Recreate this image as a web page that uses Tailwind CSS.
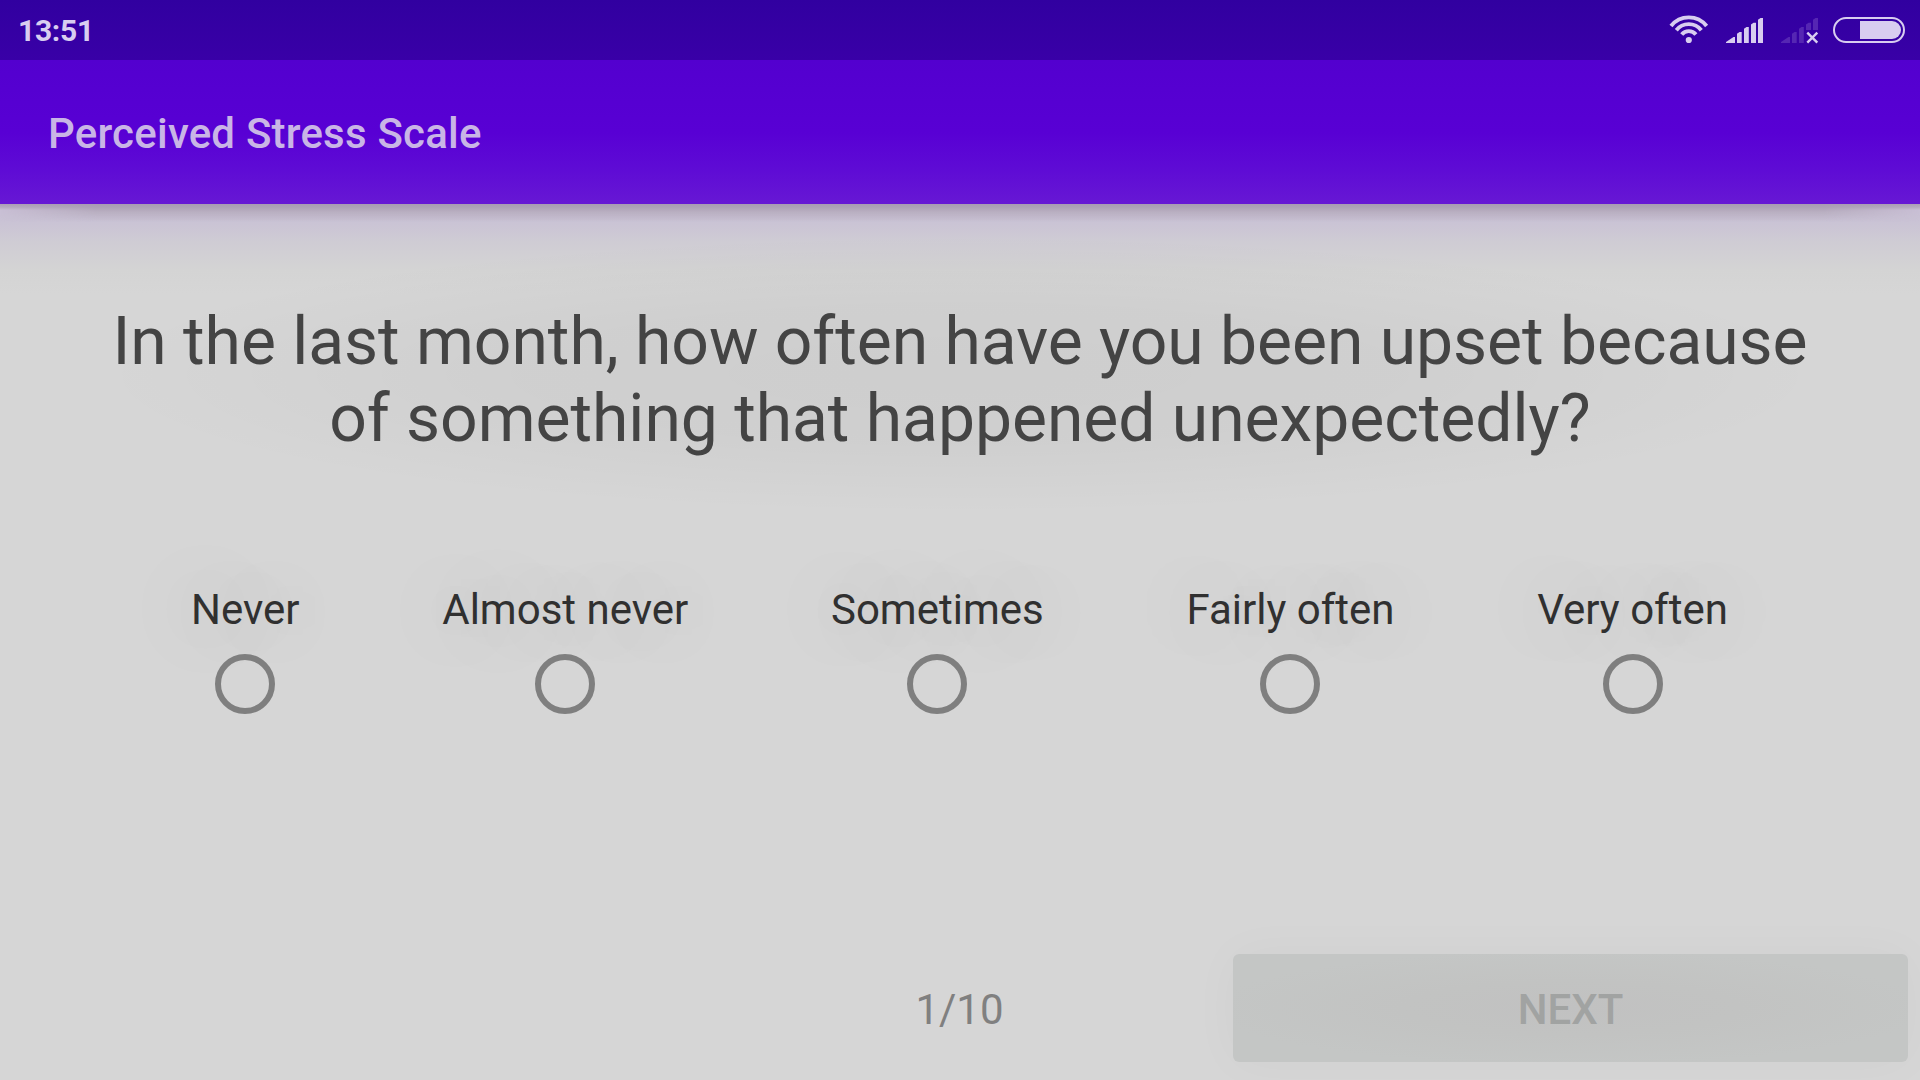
<!DOCTYPE html>
<html lang="en">
<head>
<meta charset="utf-8">
<title>Perceived Stress Scale</title>
<script src="https://cdn.jsdelivr.net/npm/@tailwindcss/browser@4"></script>
</head>
<body class="w-[1920px] h-[1080px] overflow-hidden flex flex-col bg-[#d6d6d6] font-[Roboto,sans-serif]">
  <div class="h-[60px] shrink-0 flex items-start bg-linear-to-b from-[#3100a0] to-[#3900a7] text-[#d8cdf0]">
    <span class="pl-[18px] pt-[13px] text-[30px] leading-[35px] font-bold tracking-[-0.3px]">13:51</span>
    <div class="ml-auto pr-[15px] flex">
      <svg class="mt-[15px] mr-[17px]" width="40" height="30" viewBox="0 0 40 30" fill="none" stroke="currentColor" stroke-width="3.9">
        <path d="M2 11A22.7 22.7 0 0 1 37.6 11M7.3 15.2A15.9 15.9 0 0 1 32.3 15.2M12.7 19.5A9.1 9.1 0 0 1 26.9 19.5"/>
        <circle cx="19.8" cy="25" r="3.1" fill="currentColor" stroke="none"/>
      </svg>
      <svg class="mt-[18px] mr-[17px]" width="38" height="26" viewBox="0 0 38 26" fill="currentColor">
        <path d="M0 25V24L7.5 19H9V25ZM11 25V15.8L13.5 14H15.7V25ZM18 25V10.8L20.5 9H22.8V25ZM25 25V6.5L27.5 4.8H30V25ZM32 25V1.8L34.5 0H37V25Z"/>
      </svg>
      <svg class="mt-[18px] mr-[14px]" width="38" height="26" viewBox="0 0 38 26">
        <path fill="#5526b3" d="M0 25V24L7.5 19H9V25ZM11 25V15.8L13.5 14H15.7V25ZM18 25V10.8L20.5 9H22.8V25ZM25 12V6.5L27.5 4.8H30V12ZM32 12V1.8L34.5 0H37V12Z"/>
        <path stroke="currentColor" stroke-width="2.4" d="M26.3 14.7L36.3 24.7M36.3 14.7L26.3 24.7"/>
      </svg>
      <svg class="mt-[17px]" width="72" height="26" viewBox="0 0 72 26">
        <rect x="1" y="1" width="70" height="24" rx="12" fill="none" stroke="currentColor" stroke-width="2"/>
        <path fill="currentColor" d="M27 4H59A9 9 0 0 1 59 22H27Z"/>
      </svg>
    </div>
  </div>

  <header class="relative z-10 h-36 shrink-0 bg-[linear-gradient(#5300cf,#5800d4_50%,#5e0bd5_75%,#6718d4)]">
    <h1 class="pl-12 pt-[49px] text-[42px] leading-[49px] font-medium tracking-[0.21px] text-[#c9b5e6]">Perceived Stress Scale</h1>
  </header>

  <main class="relative flex-1 flex flex-col bg-[linear-gradient(#ac9fb6,#b5aabf_3px,#c9bfd5_6px,#cac3d5_18px,#cfccd4_38px,#d4d4d4_66px,#d6d6d6_90px)]">
    <div class="absolute inset-x-0 top-0 h-5 bg-[linear-gradient(#a89bb3,#aca1b6_3px,#b9afc1_8px,transparent_18px)] mask-x-from-95% mask-x-to-100%"></div>
    <p class="pt-[99px] pb-16 text-center text-[66px] leading-[77px] tracking-[-0.04px] text-[#444444] bg-[radial-gradient(ellipse_870px_140px_at_50%_170px,rgb(0_0_0/0.04),rgb(0_0_0/0.03)_50%,transparent)]">In the last month, how often have you been upset because<br>of something that happened unexpectedly?</p>

    <div class="pt-16 pl-[191px] flex gap-[142.7px] text-[42px] leading-[49px] text-[#303030] text-shadow-[0_0_80px_rgb(0_0_0/0.3)]">
      <label class="flex flex-col items-center gap-[20px]">Never<span class="size-[60px] rounded-full border-6 border-[#7f7f7f]"></span></label>
      <label class="flex flex-col items-center gap-[20px]">Almost never<span class="size-[60px] rounded-full border-6 border-[#7f7f7f]"></span></label>
      <label class="flex flex-col items-center gap-[20px]">Sometimes<span class="size-[60px] rounded-full border-6 border-[#7f7f7f]"></span></label>
      <label class="flex flex-col items-center gap-[20px]">Fairly often<span class="size-[60px] rounded-full border-6 border-[#7f7f7f]"></span></label>
      <label class="flex flex-col items-center gap-[20px]">Very often<span class="size-[60px] rounded-full border-6 border-[#7f7f7f]"></span></label>
    </div>

    <footer class="mt-auto mb-[18px] pr-3 flex items-center justify-end text-[42px] leading-[49px]">
      <span class="w-[547px] pt-0.5 text-center text-[#808080]">1/10</span>
      <button class="w-[675px] h-[108px] pt-0.5 rounded-md font-medium text-[#a1a3a2] bg-[radial-gradient(ellipse_at_center,#c1c1c1,#c2c3c2_35%,#c4c6c5_75%)] shadow-[0_0_50px_rgb(0_0_0/0.03)]">NEXT</button>
    </footer>
  </main>
</body>
</html>
